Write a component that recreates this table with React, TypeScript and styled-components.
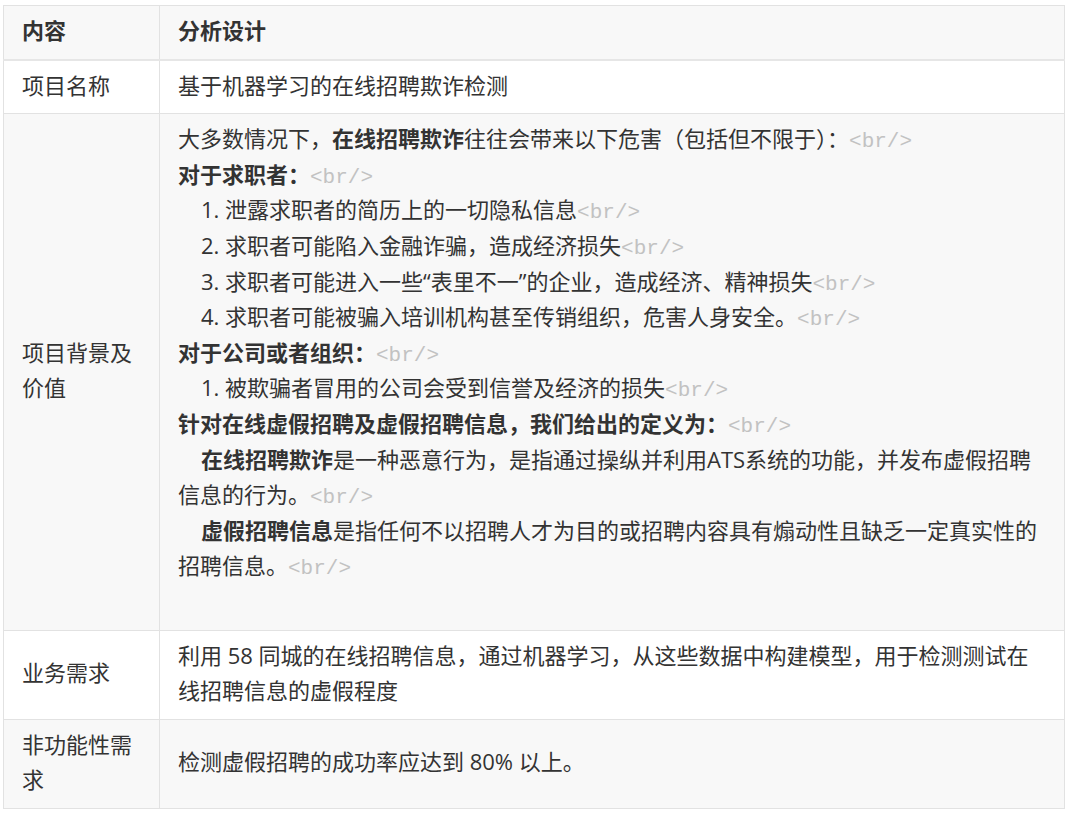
import { ReactNode } from 'react';
import styled, { createGlobalStyle } from 'styled-components';

const GlobalStyle = createGlobalStyle`
  html, body {
    margin: 0;
    padding: 0;
    background: #fff;
  }

  body {
    font-family: "Open Sans", "Noto Sans CJK SC", sans-serif;
    color: #333;
  }
`;

const Page = styled.div`
  padding: 5px 0 0 3px;
`;

const Table = styled.table`
  width: 1062px;
  border-collapse: collapse;
  font-size: 22px;
  line-height: 35.6px;
`;

const Row = styled.tr<{ $shade?: boolean }>`
  background: ${props => (props.$shade ? '#f8f8f8' : '#fff')};
`;

const HeadCell = styled.th<{ $narrow?: boolean }>`
  width: ${props => (props.$narrow ? '119px' : 'auto')};
  padding: 7px 18px 10px;
  border: 1px solid #e2e2e2;
  border-bottom: 2px solid #e6e6e6;
  text-align: left;
  font-weight: 600;
  vertical-align: middle;
`;

const Cell = styled.td<{ $label?: boolean }>`
  padding: 7px 18px 10px;
  border: 1px solid #e2e2e2;
  vertical-align: ${props => (props.$label ? 'middle' : 'top')};
`;

const Line = styled.div<{ $indent?: boolean }>`
  min-height: 35.6px;
  text-indent: ${props => (props.$indent ? '23px' : '0')};
`;

const Strong = styled.strong`
  font-weight: 700;
`;

const Tag = styled.span`
  font-family: "Liberation Mono", monospace;
  font-size: 21px;
  line-height: 1;
  color: #c2c2c2;
`;

function Br() {
  return <Tag>{'<br/>'}</Tag>;
}

interface TextLineProps {
  indent?: boolean;
  children?: ReactNode;
}

function TextLine({ indent, children }: TextLineProps) {
  return (
    <Line $indent={indent}>
      {children}
      <Br />
    </Line>
  );
}

export default function App() {
  return (
    <Page>
      <GlobalStyle />
      <Table>
        <thead>
          <Row $shade>
            <HeadCell $narrow>内容</HeadCell>
            <HeadCell>分析设计</HeadCell>
          </Row>
        </thead>
        <tbody>
          <Row>
            <Cell $label>项目名称</Cell>
            <Cell>基于机器学习的在线招聘欺诈检测</Cell>
          </Row>
          <Row $shade>
            <Cell $label>项目背景及价值</Cell>
            <Cell>
              <TextLine>
                大多数情况下，<Strong>在线招聘欺诈</Strong>往往会带来以下危害（包括但不限于）：
              </TextLine>
              <TextLine>
                <Strong>对于求职者：</Strong>
              </TextLine>
              <TextLine indent>1. 泄露求职者的简历上的一切隐私信息</TextLine>
              <TextLine indent>2. 求职者可能陷入金融诈骗，造成经济损失</TextLine>
              <TextLine indent>3. 求职者可能进入一些“表里不一”的企业，造成经济、精神损失</TextLine>
              <TextLine indent>4. 求职者可能被骗入培训机构甚至传销组织，危害人身安全。</TextLine>
              <TextLine>
                <Strong>对于公司或者组织：</Strong>
              </TextLine>
              <TextLine indent>1. 被欺骗者冒用的公司会受到信誉及经济的损失</TextLine>
              <TextLine>
                <Strong>针对在线虚假招聘及虚假招聘信息，我们给出的定义为：</Strong>
              </TextLine>
              <TextLine indent>
                <Strong>在线招聘欺诈</Strong>是一种恶意行为，是指通过操纵并利用ATS系统的功能，并发布虚假招聘信息的行为。
              </TextLine>
              <TextLine indent>
                <Strong>虚假招聘信息</Strong>是指任何不以招聘人才为目的或招聘内容具有煽动性且缺乏一定真实性的招聘信息。
              </TextLine>
              <Line />
            </Cell>
          </Row>
          <Row>
            <Cell $label>业务需求</Cell>
            <Cell>
              利用 58 同城的在线招聘信息，通过机器学习，从这些数据中构建模型，用于检测测试在线招聘信息的虚假程度
            </Cell>
          </Row>
          <Row $shade>
            <Cell $label>非功能性需求</Cell>
            <Cell $label>检测虚假招聘的成功率应达到 80% 以上。</Cell>
          </Row>
        </tbody>
      </Table>
    </Page>
  );
}
